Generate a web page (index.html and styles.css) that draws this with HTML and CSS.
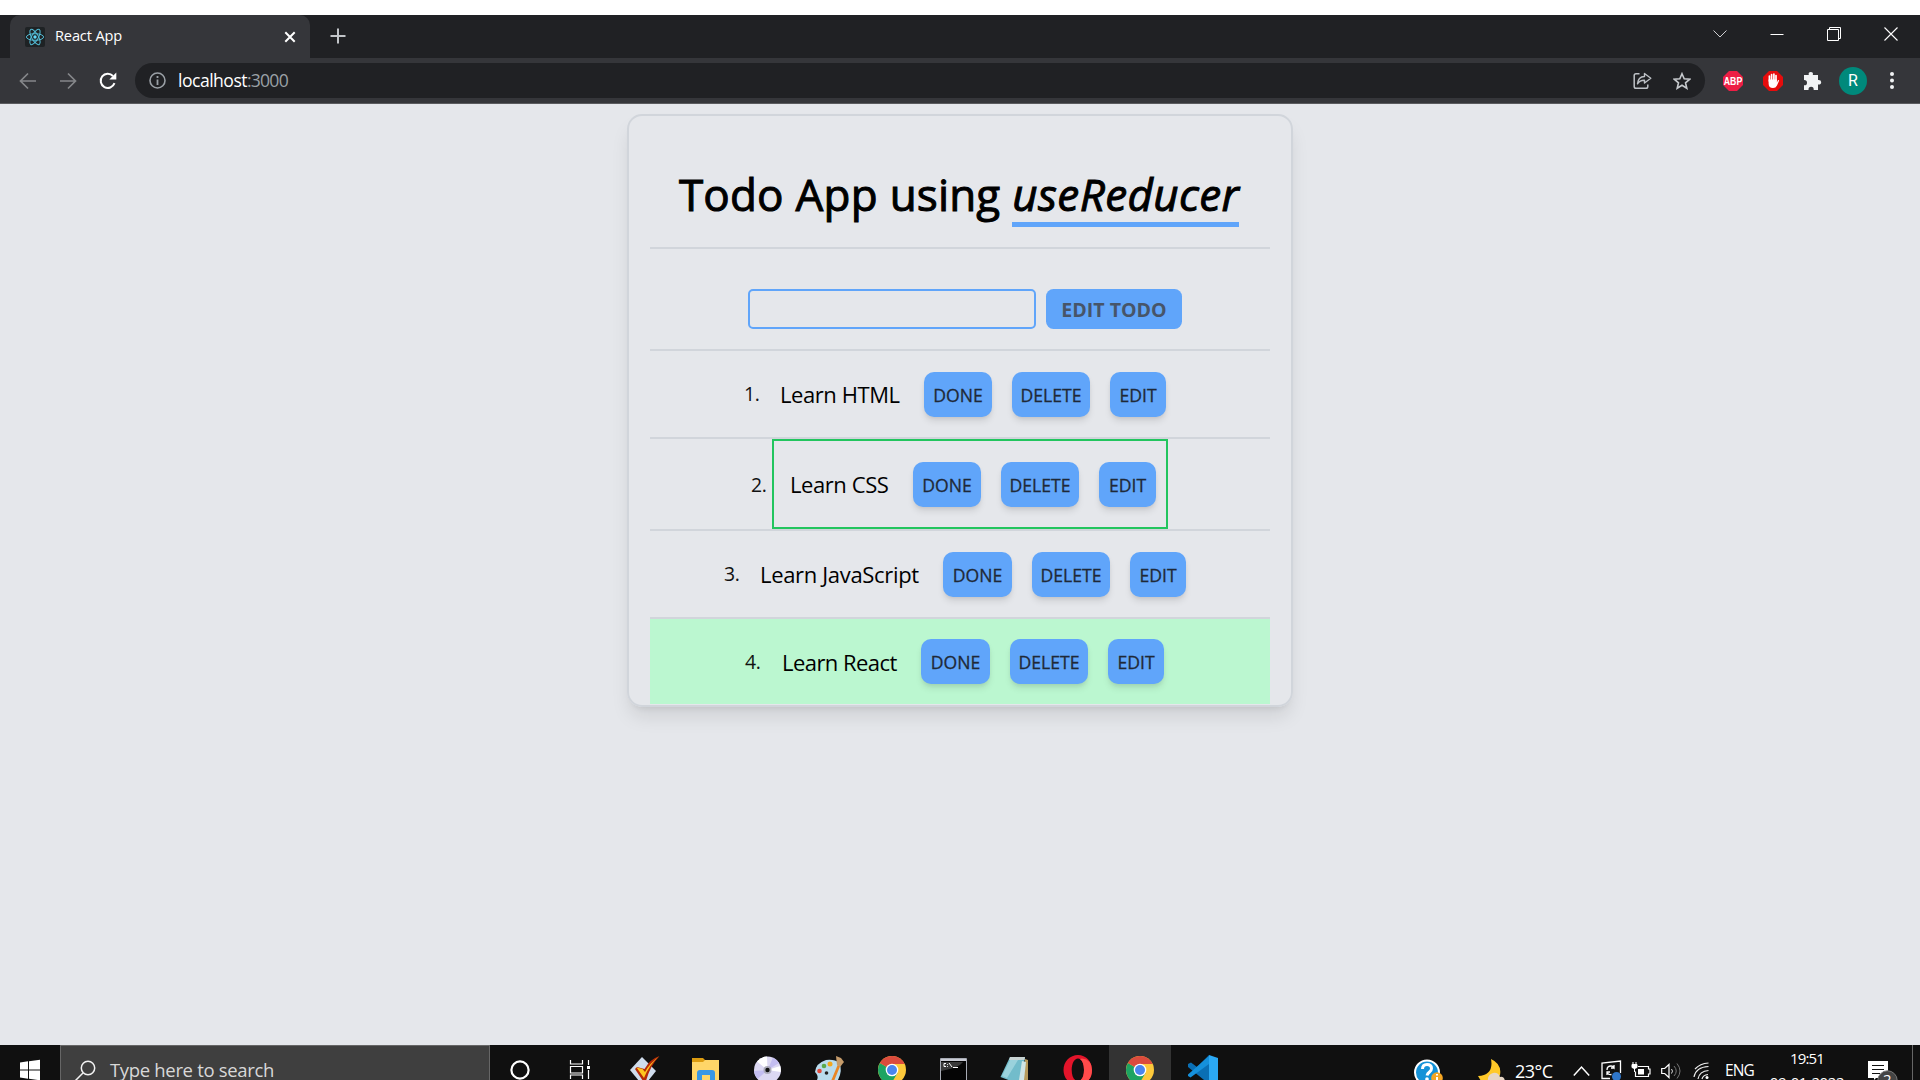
FILE: index.html
```html
<!DOCTYPE html>
<html lang="en">
<head>
<meta charset="utf-8">
<title>React App</title>
<link rel="stylesheet" href="styles.css">
</head>
<body>
<div class="screen">
  <header class="tabs">
    <div class="tab">
      <svg class="favicon" width="20" height="20" viewBox="0 0 20 20"><rect width="20" height="20" rx="2" fill="#1e2224"/><g fill="none" stroke="#53bcd6" stroke-width="1"><ellipse cx="10" cy="10" rx="8.6" ry="3.3"/><ellipse cx="10" cy="10" rx="8.6" ry="3.3" transform="rotate(60 10 10)"/><ellipse cx="10" cy="10" rx="8.6" ry="3.3" transform="rotate(120 10 10)"/></g><circle cx="10" cy="10" r="1.7" fill="#61dafb"/></svg>
      <span class="tab-title">React App</span>
      <svg width="12" height="12" viewBox="0 0 12 12"><path d="M1.300 1.300l9.400 9.400M10.700 1.300l-9.400 9.400" stroke="#fff" stroke-width="2"/></svg>
    </div>
    <svg class="new-tab" width="16" height="16" viewBox="0 0 16 16"><path d="M8 .5v15M.5 8h15" stroke="#c2c5c9" stroke-width="2"/></svg>
    <div class="window-buttons">
      <svg width="14" height="8" viewBox="0 0 14 8"><path d="M.5.5L7 7 13.500.500" fill="none" stroke="#cfd0d2"/></svg>
      <svg width="14" height="8" viewBox="0 0 14 8"><path d="M.5 4.500h13" stroke="#fff"/></svg>
      <svg width="14" height="14" viewBox="0 0 14 14"><path d="M.5 2.500h11v11H.500zM2.500 2.500v-2h11v11h-2" fill="none" stroke="#fff"/></svg>
      <svg width="14" height="14" viewBox="0 0 14 14"><path d="M.5.5l13 13M13.500.500l-13 13" stroke="#fff" stroke-width="1.100"/></svg>
    </div>
  </header>

  <nav class="toolbar">
    <svg class="back" width="18" height="18" viewBox="0 0 18 18"><path d="M17 9H2M9 1.500L1.500 9 9 16.500" fill="none" stroke="#85878a" stroke-width="1.700"/></svg>
    <svg class="forward" width="18" height="18" viewBox="0 0 18 18"><path d="M1 9h15M9 1.500L16.500 9 9 16.500" fill="none" stroke="#85878a" stroke-width="1.700"/></svg>
    <svg class="reload" width="18" height="18" viewBox="0 0 18 18"><path d="M15.500 11.200A7.100 7.100 0 1 1 14 4" fill="none" stroke="#fff" stroke-width="2"/><path d="M17.300.500v7h-7z" fill="#fff"/></svg>
    <div class="omnibox">
      <svg width="17" height="17" viewBox="0 0 17 17"><circle cx="8.500" cy="8.500" r="7.500" fill="none" stroke="#9aa0a6" stroke-width="1.600"/><path d="M8.500 7.500V13M8.500 4v2" stroke="#9aa0a6" stroke-width="1.800"/></svg>
      <span class="url">localhost<span class="port">:3000</span></span>
      <svg class="share" width="19" height="18" viewBox="0 0 19 18"><path d="M6.500 1.800H3Q1.200 1.800 1.200 3.600V14.500Q1.200 16.300 3 16.300H13Q14.800 16.300 14.800 14.500V12.500" fill="none" stroke="#bdc1c6" stroke-width="1.500"/><path d="M4.500 11.800Q5 4.800 11.500 4.500V1.500L17.800 6.300 11.500 11V8.200Q7 8 4.500 11.800Z" fill="none" stroke="#bdc1c6" stroke-width="1.400" stroke-linejoin="round"/></svg>
      <svg width="18" height="18" viewBox="0 0 18 18"><path d="M9 1.700l2.200 5 5.500.5-4.200 3.600 1.300 5.400L9 13.300l-4.800 2.900 1.300-5.400L1.300 7.200l5.500-.5z" fill="none" stroke="#c6c9cd" stroke-width="1.600"/></svg>
    </div>
    <svg class="abp" width="22" height="22" viewBox="0 0 22 22"><path d="M7 1h8l6 6v8l-6 6H7l-6-6V7z" fill="#ed1e45"/><text x="11" y="15" text-anchor="middle" textLength="18.500" lengthAdjust="spacingAndGlyphs">ABP</text></svg>
    <svg width="22" height="22" viewBox="0 0 22 22"><path d="M7 1h8l6 6v8l-6 6H7l-6-6V7z" fill="#e60c0c"/><path d="M7.400 11V6.200M9.600 10V4.500M11.900 10V4.200M14 10.500V5.600" stroke="#fff" stroke-width="1.700" stroke-linecap="round"/><path d="M6.600 9.500h8.300v3l1-2.200q1.300-.8 1.200.4L15 15.500Q13.800 18 11 18q-4.400 0-4.400-4.500z" fill="#fff"/></svg>
    <svg width="20" height="20" viewBox="0 0 20 20"><path d="M2 4h4.800Q6 1 8.800 1t2 3H16v5q3.200-.3 3.200 2.200T16 13.500V19h-4.300q.2-3.300-2.600-3.300T6.500 19H2v-4.700q3 .2 3-2.600T2 9z" fill="#f1f3f4"/></svg>
    <div class="avatar">R</div>
    <svg width="4" height="17" viewBox="0 0 4 17"><g fill="#f1f3f4"><circle cx="2" cy="2" r="2"/><circle cx="2" cy="8.500" r="2"/><circle cx="2" cy="15" r="2"/></g></svg>
  </nav>

  <main class="page">
    <section class="card">
      <h1 class="title">Todo App using <em>useReducer</em></h1>
      <form class="form">
        <input class="field" type="text">
        <button class="submit" type="button">EDIT TODO</button>
      </form>
      <div class="todo html">
        <span class="num">1.</span>
        <div class="item"><span class="name">Learn HTML</span><button class="btn">DONE</button><button class="btn wide">DELETE</button><button class="btn narrow">EDIT</button></div>
      </div>
      <div class="todo css">
        <span class="num">2.</span>
        <div class="item editing"><span class="name">Learn CSS</span><button class="btn">DONE</button><button class="btn wide">DELETE</button><button class="btn narrow">EDIT</button></div>
      </div>
      <div class="todo js">
        <span class="num">3.</span>
        <div class="item"><span class="name">Learn JavaScript</span><button class="btn">DONE</button><button class="btn wide">DELETE</button><button class="btn narrow">EDIT</button></div>
      </div>
      <div class="todo react done">
        <span class="num">4.</span>
        <div class="item"><span class="name">Learn React</span><button class="btn">DONE</button><button class="btn wide">DELETE</button><button class="btn narrow">EDIT</button></div>
      </div>
    </section>
  </main>

  <footer class="taskbar">
    <div class="start"><svg width="60" height="35" viewBox="0 0 60 35"><path d="M20 17.500l8-1.200V24.500h-8zM29 16.200l11-1.500v9.800H29zM20 25.500h8v8.200l-8-1.200zM29 25.500h11v9.800l-11-1.500z" fill="#fff"/></svg></div>
    <div class="search">
      <svg width="22" height="22" viewBox="0 0 22 22"><circle cx="14" cy="8" r="6.700" fill="none" stroke="#f2f2f2" stroke-width="1.500"/><path d="M9.200 12.800L1 21" stroke="#f2f2f2" stroke-width="1.500"/></svg>
      <span>Type here to search</span>
    </div>
    <div class="pinned">
      <svg viewBox="0 0 62 35"><circle cx="31" cy="25" r="8.600" fill="none" stroke="#fff" stroke-width="2.200"/></svg>
      <svg viewBox="0 0 62 35"><path d="M19.500 15v4h12v-4M19.500 34v-4h12v4M19.500 21.500h12v6.500h-12zM37.500 15v5M37.500 25v9" fill="none" stroke="#fff" stroke-width="1.200"/><path d="M36 21h3v3h-3z" fill="#fff"/></svg>
      <svg viewBox="0 0 62 35"><path d="M29 12l14 14-8 10H26L17 25z" fill="#cfdcec"/><path d="M24 22l-2 2 8 12h3q4-15 13.500-25Q37 14 31.500 24z" fill="#b52a08"/><path d="M23.500 22.500l6 1.500 2.500 3Q36 19 46 11.500 36 20 31 33z" fill="#ffc61f"/></svg>
      <svg viewBox="0 0 62 35"><path d="M17 15h27v22H17z" fill="#ffd668"/><path d="M17 13h11l2 2-2 2H17z" fill="#dc9c10"/><path d="M22 36v-8q0-3 3-3h12q3 0 3 3v8h-5v-6h-8v6z" fill="#3997e4"/></svg>
      <svg viewBox="0 0 62 35"><circle cx="30.500" cy="25" r="13.500" fill="#dcd8f2"/><path d="M30.500 25L20 16.500a13.500 13.500 0 0 1 10-5zM30.500 25l12.700-4a13.500 13.500 0 0 1 .5 6z" fill="#fff"/><path d="M30.500 25L42 18a13.500 13.500 0 0 0-6-5.500zM30.500 25l-10 9a13.500 13.500 0 0 1-3.500-8z" fill="#c3bdf0"/><circle cx="30.500" cy="25" r="4" fill="#aaa9b8"/><circle cx="30.500" cy="25" r="2.200" fill="#111"/></svg>
      <svg viewBox="0 0 62 35"><path d="M16 27q1-9 11-12 9-1 13 3 4 7-1 17H18q2-4-2-8z" fill="#b9dcee"/><circle cx="20.500" cy="26" r="2.300" fill="#e34b3c"/><circle cx="25" cy="21" r="2.300" fill="#5aaa4c"/><circle cx="31" cy="19" r="2.500" fill="#f2a71f"/><circle cx="27.500" cy="28" r="1.800" fill="#222"/><path d="M39.500 18L32 36h3l7-17z" fill="#e88625"/><path d="M37 11l5 2 3 4-4 5-3-2z" fill="#c69c6b"/></svg>
      <svg viewBox="0 0 62 35"><defs><g id="chrome"><circle cx="31" cy="25" r="14" fill="#fdc93b"/><path d="M31 25L18.900 18A14 14 0 0 0 30 39L36.500 28z" fill="#1da462"/><path d="M31 25L18.900 18A14 14 0 0 1 43.600 19H31z" fill="#db4b3d"/><circle cx="31" cy="25" r="6.300" fill="#fff"/><circle cx="31" cy="25" r="5" fill="#4a86ee"/></g></defs><use href="#chrome"/></svg>
      <svg viewBox="0 0 62 35"><path d="M17.500 13.500h26v24h-26z" fill="#050505" stroke="#a7abb4"/><path d="M18 14h25v2H18z" fill="#c9cbd4"/><path d="M18 17h22q-4 6-22 9z" fill="#3a3a3a"/><path d="M23 18.500h-2v3h2M24.500 19v.8M24.500 21v.8M26 18l3 4M30 22.500h5" stroke="#fff" fill="none"/></svg>
      <svg viewBox="0 0 62 35"><path d="M40 14l3 1v20h-5z" fill="#b79b5c"/><path d="M25 12h15l-4 24H26L15.500 32z" fill="#72bccb"/><path d="M25 12h15l-.5 3H24z" fill="#c8d3d2"/><path d="M25 15h8L22 33l-5-2z" fill="#b5e1e8" opacity=".6"/><path d="M37 16l4 1-2 18h-5z" fill="#cfe5e6"/></svg>
      <svg viewBox="0 0 62 35"><path fill-rule="evenodd" d="M31 10c8 0 14 6.500 14 15s-6 15-14 15-14.500-6.500-14.500-15S23 10 31 10zm0 3.500c-3.700 0-6.300 5-6.300 11.500s2.600 11 6.300 11 6-4.500 6-11-2.300-11.500-6-11.500z" fill="#e3142a"/><path d="M35 13.500q10 1 10 11.500 0 10-8 13-4 1-5-2 5-2 5-11 0-8-4-11z" fill="#ff4b4b"/></svg>
      <svg class="active" viewBox="0 0 62 35"><use href="#chrome"/></svg>
      <svg viewBox="0 0 62 35"><path d="M38 10L26 22l-6-4.500-3 1.500v3l21 17z" fill="#0a6fb5"/><path d="M17 29.500L38 11v8L19.500 32.500 17 31z" fill="#1590db"/><path d="M38 10l9 3v25h-9z" fill="#2ba9f5"/></svg>
    </div>
    <div class="tray">
      <svg class="help" width="30" height="35" viewBox="0 0 30 35"><circle cx="14" cy="27.500" r="12" fill="#1492d8" stroke="#fff" stroke-width="2"/><path d="M9.500 24q0-4.500 4.500-4.500t4.500 4q0 2-2 3.500t-2.500 3.500" fill="none" stroke="#fff" stroke-width="3"/><circle cx="14" cy="34" r="1.800" fill="#fff"/><circle cx="24" cy="33" r="5.800" fill="#f5a623"/><path d="M24 29v1.500M24 32v4" stroke="#fff" stroke-width="2"/></svg>
      <svg class="moon" width="30" height="35" viewBox="0 0 30 35"><path d="M15 14q11 5 9 16l-4 6H5l-3-5q16-1 13-17z" fill="#ffc928"/><path d="M12 36q-1-6 5-8 5-1 7 4 4-1 5 4z" fill="#e6d6c5"/></svg>
      <span class="temp">23°C</span>
      <svg class="chevron" width="17" height="35" viewBox="0 0 17 35"><path d="M.8 30.500L8.500 22l7.700 8.500" fill="none" stroke="#fff" stroke-width="1.500"/></svg>
      <svg class="sync" width="21" height="35" viewBox="0 0 21 35"><path d="M9 33.500H1V18l18.500-2v12" fill="none" stroke="#fff" stroke-width="1.300"/><path d="M6 25q0-4 4-4 2 0 3 1.500V20m0 3h-3M6 30v-3h3m-2.500 1q1 2 4 1.500" fill="none" stroke="#fff" stroke-width="1.300"/><circle cx="15.500" cy="31.500" r="4.500" fill="#2f76c9"/></svg>
      <svg class="battery" width="20" height="35" viewBox="0 0 20 35"><path d="M7 21.500h10.500v2.500H19v5h-1.500v2.500H4.500v-5" fill="none" stroke="#fff" stroke-width="1.200"/><path d="M7 24h6v5.500H7z" fill="#fff"/><path d="M2 19v-2M5 19v-2M1 19.500h5v3q-2.500 2-5 0zM3.500 23v4" stroke="#fff" fill="#fff"/></svg>
      <svg class="sound" width="20" height="35" viewBox="0 0 20 35"><path d="M.700 23.500h3l4.300-4v13l-4.300-4h-3z" fill="none" stroke="#fff" stroke-width="1.200"/><path d="M10.500 24q2 2 0 4.500" fill="none" stroke="#ddd"/><path d="M13 21q4.500 5 0 10M16 18.500q6 7.500 0 15" fill="none" stroke="#777"/></svg>
      <svg class="wifi" width="17" height="35" viewBox="0 0 17 35"><g fill="none" stroke="#eee" stroke-width="1.200"><path d="M9 34q1-4 6-4.500M5 34q1.500-8 10.500-8.500M1 32Q3 22 15.500 21.500" /><path d="M2 24Q7 18.500 15.500 18"/></g><circle cx="14" cy="32.500" r="1.500" fill="#fff"/></svg>
      <span class="lang">ENG</span>
      <div class="clock"><span class="time">19:51</span><span>09-01-2022</span></div>
      <div class="notes">
        <svg width="32" height="35" viewBox="0 0 32 35"><path d="M1 16h20v17H9l-2 2v-2H1z" fill="#fff"/><path d="M5 20.500h12M5 24.500h12M5 28.500h8" stroke="#111" stroke-width="1.200"/><circle cx="20.500" cy="35.500" r="9.700" fill="#444" stroke="#777"/></svg>
        <span class="count">2</span>
      </div>
    </div>
  </footer>
</div>
</body>
</html>
```
FILE: styles.css
```css
* { box-sizing: border-box; }
body { margin: 0; font-family: "Open Sans", "Noto Sans", sans-serif; }
button, input { font-family: inherit; padding: 0; margin: 0; }
svg { display: block; flex: none; }
.screen { width: 1920px; height: 1080px; overflow: hidden; display: flex; flex-direction: column; padding-top: 15px; background: #fff; }

/* Browser chrome */
.tabs { height: 43px; flex: none; background: #202124; display: flex; align-items: stretch; }
.tab { width: 300px; margin-left: 10px; padding: 0 14px 0 15px; display: flex; align-items: center; background: #35363a; border-radius: 10px 10px 0 0; }
.tab-title { flex: 1; margin-left: 10px; padding-bottom: 3px; font-size: 14.6px; line-height: 20px; color: #fff; letter-spacing: -.15px; }
.new-tab { margin: 13px 0 0 20px; }
.window-buttons { margin-left: auto; margin-right: 22px; height: 37px; display: flex; align-items: center; gap: 43px; }
.toolbar { height: 46px; flex: none; background: #35363a; border-bottom: 1px solid #5a5b5e; display: flex; align-items: center; padding: 0 26px 0 19px; }
.forward { margin-left: 22px; }
.reload { margin-left: 22px; }
.omnibox { width: 1570px; height: 35px; margin: 0 17px 0 18px; padding: 0 14px; border-radius: 18px; background: #202124; display: flex; align-items: center; }
.url { flex: 1; margin-left: 12px; padding-bottom: 2px; font-size: 17.6px; line-height: 24px; color: #fff; letter-spacing: -.52px; }
.port { color: #9aa0a6; letter-spacing: -.8px; }
.share { margin-right: 21px; }
.abp text { font: bold 11px "Liberation Sans", sans-serif; fill: #fff; }
.toolbar > .abp ~ svg { margin-left: 18px; }
.avatar { width: 28px; height: 28px; flex: none; margin-left: 17px; border-radius: 50%; background: #00897b; color: #fff; font: 16px/28px Roboto, sans-serif; text-align: center; }
.toolbar > .avatar ~ svg:last-child { margin-left: 23px; }

/* Todo page */
.page { flex: 1; min-height: 0; background: #e5e7eb; padding-top: 10px; }
.card { width: 666px; height: 593px; margin: 0 auto; padding: 0 21px; border: 2px solid #d1d5db; border-radius: 15px; box-shadow: 0 12.5px 18.75px -3.75px rgba(0,0,0,.1), 0 5px 7.5px -5px rgba(0,0,0,.1); }
.title { margin: 0; height: 133px; padding: 53px 0 0 29px; border-bottom: 2px solid #d1d5db; font-size: 44px; line-height: 50px; font-weight: 500; white-space: nowrap; color: #000; letter-spacing: .14px; word-spacing: .4px; -webkit-text-stroke: 1px #000; }
.title em { display: inline-block; height: 58px; border-bottom: 5px solid #60a5fa; letter-spacing: .37px; }
.form { height: 102px; padding: 40px 0 0 98px; border-bottom: 2px solid #d1d5db; display: flex; gap: 10px; }
.field { width: 288px; height: 40px; border: 2px solid #60a5fa; border-radius: 5px; background: transparent; outline: none; }
.submit { width: 136px; height: 40px; border: 0; border-radius: 7.5px; background: #60a5fa; color: #475569; font-size: 19.6px; font-weight: 700; }
.todo { height: 88px; display: flex; border-bottom: 2px solid #d1d5db; }
.num { font-size: 19.4px; line-height: 86px; color: #111; width: 30px; letter-spacing: -.4px; }
.item { display: flex; align-items: center; gap: 20px; }
.name { font-size: 22px; color: #000; white-space: nowrap; letter-spacing: -.42px; }
.btn { width: 68px; height: 45px; padding-top: 1px; border: 0; border-radius: 10px; background: #60a5fa; color: #1f2937; font-size: 17.6px; font-weight: 500; -webkit-text-stroke: .3px #1f2937; box-shadow: 0 5px 7.5px -1.25px rgba(0,0,0,.1), 0 2.5px 5px -2.5px rgba(0,0,0,.1); }
.wide { width: 78px; }
.narrow { width: 56px; }
.html { padding-left: 94px; }
.html .name { width: 124px; }
.html .num { width: 36px; }
.css { height: 92px; padding-left: 101px; }
.css .num { width: 21px; line-height: 92px; }
.css .name { width: 103px; }
.css .narrow { width: 57px; }
.editing { width: 396px; padding-left: 16px; border: 2px solid #22c55e; }
.js { padding-left: 74px; }
.js .num { width: 36px; }
.js .name { width: 163px; letter-spacing: -.33px; }
.react { height: 85px; padding-left: 95px; border-bottom: 0; }
.react .num { width: 37px; line-height: 85px; }
.react .name { width: 119px; letter-spacing: -.55px; }
.js .btn:nth-child(2), .react .btn:nth-child(2) { width: 69px; }
.done { background: #bbf7d0; }

/* Windows taskbar */
.taskbar { height: 35px; flex: none; background: #101010; display: flex; overflow: hidden; color: #fff; }
.search { width: 430px; height: 50px; padding: 14px 0 0 13px; border: 1px solid #666; background: #3f3f3f; display: flex; color: #d8d8d8; font-size: 18.5px; line-height: 24px; letter-spacing: -.33px; }
.search span { margin: -2px 0 0 14px; }
.pinned { display: flex; margin-left: -1px; }
.pinned svg { width: 62px; height: 35px; }
.pinned .active { background: #333; }
.tray { flex: 1; display: flex; padding-left: 180px; }
.moon { margin-left: 33px; }
.temp { width: 38px; margin-left: 9px; font-size: 18px; line-height: 52px; letter-spacing: -.5px; }
.chevron { margin-left: 20px; }
.sync { margin-left: 11px; }
.battery { margin-left: 9px; }
.sound { margin-left: 10px; }
.wifi { margin-left: 12px; }
.lang { width: 28px; margin-left: 15px; font-size: 15.5px; line-height: 50px; letter-spacing: -.9px; }
.clock { width: 80px; margin-left: 14px; display: flex; flex-direction: column; align-items: center; font-size: 15px; line-height: 24px; padding-top: 1px; letter-spacing: -.4px; white-space: nowrap; }
.time { letter-spacing: -.8px; }
.notes { position: relative; width: 46px; margin-left: 20px; height: 50px; border-right: 1px solid #666; }
.count { position: absolute; left: 16px; top: 24px; font-size: 15px; line-height: 20px; }
```
